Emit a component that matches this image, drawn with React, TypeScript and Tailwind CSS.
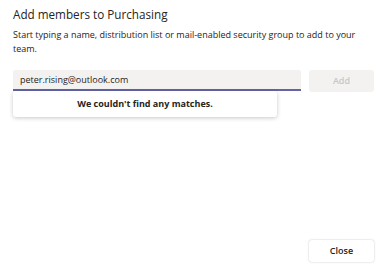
export default function App() {
  return (
    <div
      className="relative h-[267px] w-[389px] overflow-hidden bg-white text-[#252423]"
      style={{ fontFamily: '"Open Sans", "Noto Sans", sans-serif' }}
    >
      <div className="flex h-full flex-col px-[13px] pt-[6px]">
        <h2 className="text-[11.7px] leading-[16px] font-normal">Add members to Purchasing</h2>
        <p className="mt-[6px] text-[9px] leading-[14px] text-[#252423]">
          Start typing a name, distribution list or mail-enabled security group to add to your team.
        </p>

        <div className="mt-[14px] flex items-start gap-[8px]">
          <div className="relative w-[288px]">
            <div className="flex h-[21px] items-center rounded-t-[2px] border-b-2 border-[#6264a7] bg-[#f3f2f1] px-[7px] pt-[1px] text-[9px]">
              peter.rising@outlook.com
            </div>
            {/* No-results popup */}
            <div className="absolute top-[21px] left-0 z-10 flex h-[26px] w-[264px] items-center justify-center rounded-[3px] bg-white text-[9px] font-bold shadow-[0_1px_4px_rgba(0,0,0,0.22)]">
              We couldn't find any matches.
            </div>
          </div>
          <button
            type="button"
            disabled
            className="h-[22px] w-[65px] rounded-[3px] bg-[#f3f2f1] text-[9px] font-semibold text-[#c8c6c4]"
          >
            Add
          </button>
        </div>

        <div className="mt-auto mr-[2px] mb-[5px] flex justify-end">
          <button
            type="button"
            className="h-[22px] w-[65px] rounded-[3px] bg-white text-[9px] font-semibold text-[#252423] shadow-[0_0_2px_rgba(0,0,0,0.25)]"
          >
            Close
          </button>
        </div>
      </div>
    </div>
  );
}
